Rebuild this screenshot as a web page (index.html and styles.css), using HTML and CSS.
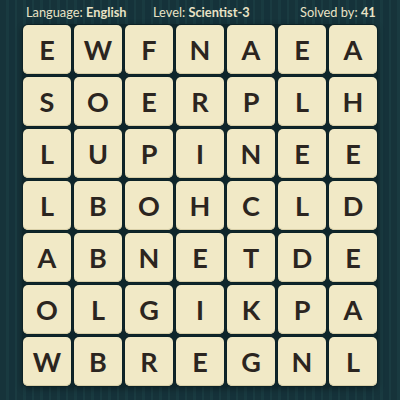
FILE: index.html
```html
<!DOCTYPE html>
<html>
<head>
<meta charset="utf-8">
<link rel="stylesheet" href="styles.css">
</head>
<body>
<div class="page">
  <div class="header">
    <span class="info lang">Language: <b>English</b></span>
    <span class="info level">Level: <b>Scientist-3</b></span>
    <span class="info solved">Solved by: <b>41</b></span>
  </div>
  <div class="board">
    <div class="tile">E</div><div class="tile">W</div><div class="tile">F</div><div class="tile">N</div><div class="tile">A</div><div class="tile">E</div><div class="tile">A</div>
    <div class="tile">S</div><div class="tile">O</div><div class="tile">E</div><div class="tile">R</div><div class="tile">P</div><div class="tile">L</div><div class="tile">H</div>
    <div class="tile">L</div><div class="tile">U</div><div class="tile">P</div><div class="tile">I</div><div class="tile">N</div><div class="tile">E</div><div class="tile">E</div>
    <div class="tile">L</div><div class="tile">B</div><div class="tile">O</div><div class="tile">H</div><div class="tile">C</div><div class="tile">L</div><div class="tile">D</div>
    <div class="tile">A</div><div class="tile">B</div><div class="tile">N</div><div class="tile">E</div><div class="tile">T</div><div class="tile">D</div><div class="tile">E</div>
    <div class="tile">O</div><div class="tile">L</div><div class="tile">G</div><div class="tile">I</div><div class="tile">K</div><div class="tile">P</div><div class="tile">A</div>
    <div class="tile">W</div><div class="tile">B</div><div class="tile">R</div><div class="tile">E</div><div class="tile">G</div><div class="tile">N</div><div class="tile">L</div>
  </div>
</div>
</body>
</html>
```
FILE: styles.css
```css
html, body {
  margin: 0;
  padding: 0;
}
body {
  width: 400px;
  height: 400px;
  overflow: hidden;
  background-color: #17353a;
  background-image: repeating-linear-gradient(90deg,
    #16333a 0px, #16333a 6px,
    #193a40 6px, #193a40 9px,
    #15323a 9px, #15323a 15px,
    #1a3b41 15px, #1a3b41 17px);
  font-family: Lato, "Open Sans", sans-serif;
}
.page {
  display: flex;
  flex-direction: column;
  align-items: center;
}
.header {
  box-sizing: border-box;
  width: 400px;
  height: 24px;
  display: flex;
  align-items: center;
  padding-left: 26px;
  color: #e8e2c6;
  font-size: 12.8px;
  line-height: 1;
}
.lang { width: 127px; }
.level { width: 147px; }
.info b {
  font-weight: 700;
}
.board {
  display: grid;
  grid-template-columns: repeat(7, 48px);
  grid-auto-rows: 48.5px;
  gap: 3.5px 3px;
  padding: 1px;
  background: #0f262b;
  border-radius: 6px;
  box-shadow: 0 2px 6px rgba(0, 0, 0, 0.35);
}
.tile {
  background: #f1e9c6;
  border-radius: 5px;
  box-shadow: inset 0 -1px 0 #d8cfa8, 0 0 0 0.8px #0d2226;
  display: flex;
  align-items: center;
  justify-content: center;
  color: #2b2520;
  font-size: 27px;
  font-weight: 700;
}
```
